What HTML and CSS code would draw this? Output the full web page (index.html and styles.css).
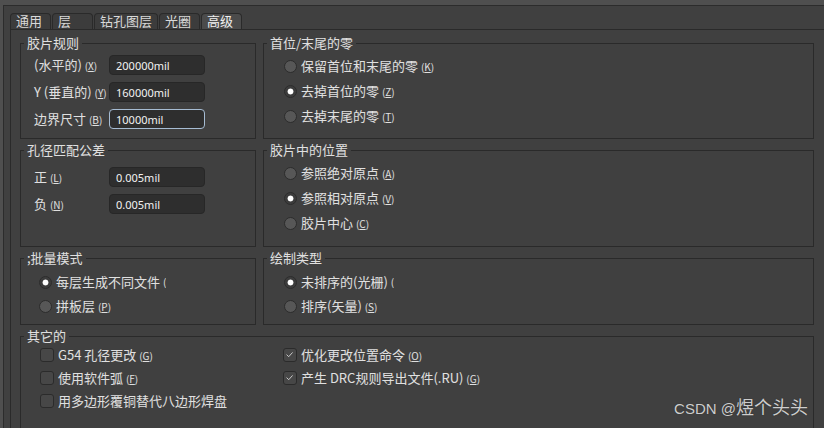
FILE: index.html
```html
<!DOCTYPE html>
<html lang="zh-CN">
<head>
    <meta charset="UTF-8">
    <meta name="viewport" content="width=device-width, initial-scale=1.0">
    <title>Gerber 设置 - 高级</title>
    <link rel="stylesheet" href="styles.css">
</head>
<body>
    <section class="dialog">
      <div class="tabs">
        <span class="tab">通用</span>
        <span class="tab">层</span>
        <span class="tab">钻孔图层</span>
        <span class="tab">光圈</span>
        <span class="tab is-active">高级</span>
      </div>

      <div class="panel">
        <fieldset class="group">
          <legend class="group-title">胶片规则</legend>
          <div class="fields">
            <label class="field-label">(水平的) <span class="key">(<u>X</u>)</span></label>
            <input class="field-input" type="text" value="200000mil" readonly>
            <label class="field-label">Y (垂直的) <span class="key">(<u>Y</u>)</span></label>
            <input class="field-input" type="text" value="160000mil" readonly>
            <label class="field-label">边界尺寸 <span class="key">(<u>B</u>)</span></label>
            <input class="field-input is-focused" type="text" value="10000mil" readonly>
          </div>
        </fieldset>

        <fieldset class="group">
          <legend class="group-title">首位/末尾的零</legend>
          <div class="options">
            <div class="option"><span class="radio"></span><span>保留首位和末尾的零 <span class="key">(<u>K</u>)</span></span></div>
            <div class="option"><span class="radio is-checked"></span><span>去掉首位的零 <span class="key">(<u>Z</u>)</span></span></div>
            <div class="option"><span class="radio"></span><span>去掉末尾的零 <span class="key">(<u>T</u>)</span></span></div>
          </div>
        </fieldset>

        <fieldset class="group">
          <legend class="group-title">孔径匹配公差</legend>
          <div class="fields fields-tolerance">
            <label class="field-label">正 <span class="key">(<u>L</u>)</span></label>
            <input class="field-input" type="text" value="0.005mil" readonly>
            <label class="field-label">负 <span class="key">(<u>N</u>)</span></label>
            <input class="field-input" type="text" value="0.005mil" readonly>
          </div>
        </fieldset>

        <fieldset class="group">
          <legend class="group-title">胶片中的位置</legend>
          <div class="options">
            <div class="option"><span class="radio"></span><span>参照绝对原点 <span class="key">(<u>A</u>)</span></span></div>
            <div class="option"><span class="radio is-checked"></span><span>参照相对原点 <span class="key">(<u>V</u>)</span></span></div>
            <div class="option"><span class="radio"></span><span>胶片中心 <span class="key">(<u>C</u>)</span></span></div>
          </div>
        </fieldset>

        <fieldset class="group">
          <legend class="group-title">;批量模式</legend>
          <div class="options options-short options-batch">
            <div class="option"><span class="radio is-checked"></span><span>每层生成不同文件 <span class="key key-cut">(</span></span></div>
            <div class="option"><span class="radio"></span><span>拼板层 <span class="key">(<u>P</u>)</span></span></div>
          </div>
        </fieldset>

        <fieldset class="group">
          <legend class="group-title">绘制类型</legend>
          <div class="options options-short">
            <div class="option"><span class="radio is-checked"></span><span>未排序的(光栅) <span class="key key-cut">(</span></span></div>
            <div class="option"><span class="radio"></span><span>排序(矢量) <span class="key">(<u>S</u>)</span></span></div>
          </div>
        </fieldset>

        <fieldset class="group group-wide">
          <legend class="group-title">其它的</legend>
          <div class="checks">
            <div class="check-col">
              <div class="option"><span class="check"></span><span>G54 孔径更改 <span class="key">(<u>G</u>)</span></span></div>
              <div class="option"><span class="check"></span><span>使用软件弧 <span class="key">(<u>F</u>)</span></span></div>
              <div class="option"><span class="check"></span><span>用多边形覆铜替代八边形焊盘</span></div>
            </div>
            <div class="check-col">
              <div class="option">
                <span class="check"><svg viewBox="0 0 14 14" width="12" height="12"><polyline points="3,6.5 5.5,9 10,4" fill="none" stroke="#cfcfcf" stroke-width="1.1"/></svg></span>
                <span>优化更改位置命令 <span class="key">(<u>O</u>)</span></span>
              </div>
              <div class="option">
                <span class="check"><svg viewBox="0 0 14 14" width="12" height="12"><polyline points="3,6.5 5.5,9 10,4" fill="none" stroke="#cfcfcf" stroke-width="1.1"/></svg></span>
                <span>产生 DRC规则导出文件(.RU) <span class="key">(<u>G</u>)</span></span>
              </div>
            </div>
          </div>
        </fieldset>
      </div>
    </section>

    <div class="watermark">CSDN @<span class="watermark-name">煜个头头</span></div>
</body>
</html>
```

FILE: styles.css
```css
html,
body {
  height: 100%;
}

body {
  position: relative;
  margin: 0;
  overflow: hidden;

  font-size: 13px;
  line-height: 16px;
  font-family: "Noto Sans CJK SC", "Noto Sans", sans-serif;
  color: #e0e0e0;

  background-color: #4f4f4f;
}

.dialog {
  display: flex;
  flex-direction: column;
  margin: 5px 0 0 3px;
  padding: 7px 0 0 6px;

  background-color: #404040;
  border-top: 1px solid #2c2c2c;
  border-left: 1px solid #2c2c2c;
}

.tabs {
  display: flex;
  gap: 1px;
  height: 16px;
}

.tab {
  box-sizing: border-box;
  min-width: 41px;
  height: 16px;
  padding: 0 5px;

  line-height: 14px;
  color: #d9d9d9;

  background-color: #3c3c3c;
  border: 1px solid #2a2a2a;
  border-bottom: none;
  border-radius: 4px 4px 0 0;
}

.tab.is-active {
  color: #f0f0f0;
  background-color: #4b4b4b;
}

.panel {
  display: grid;
  grid-template-columns: 236px 551px;
  grid-template-rows: 104px 105px 75px 120px;
  gap: 3px 7px;
  padding: 5px 10px 0 9px;

  border-top: 1px solid #2a2a2a;
  border-left: 1px solid #2a2a2a;
}

.group {
  min-width: 0;
  margin: 0;
  padding: 0;
  border: 1px solid #2a2a2a;
}

.group-wide {
  grid-column: 1 / -1;
}

.group-title {
  margin-left: 3px;
  padding: 0 3px;
  line-height: 16px;
}

.fields {
  display: grid;
  grid-template-columns: 75px 96px;
  align-items: center;
  row-gap: 7px;
  padding: 4px 0 0 13px;
}

.fields-tolerance {
  padding-top: 9px;
}

.field-input {
  box-sizing: border-box;
  width: 96px;
  height: 20px;
  padding: 0 6px;

  font: 11px "Noto Sans", sans-serif;
  color: #f2f2f2;

  background-color: #2e2e2e;
  border: 1px solid #272727;
  border-radius: 4px;
  outline: none;
}

.field-input.is-focused {
  border-color: #a6bcd3;
}

.key {
  font-size: 10px;
}

.key-cut {
  display: inline-block;
  width: 3px;
  overflow: hidden;
  vertical-align: top;
}

.options {
  display: flex;
  flex-direction: column;
  gap: 5px;
  padding: 5px 0 0 20px;
}

.options-short {
  gap: 4px;
  padding-top: 6px;
}

.options-batch {
  padding-left: 18px;
}

.option {
  display: flex;
  align-items: center;
  gap: 4px;
  height: 20px;
  white-space: nowrap;
}

.radio {
  flex-shrink: 0;
  box-sizing: border-box;
  width: 13px;
  height: 13px;

  background-color: #575757;
  border: 1px solid #2c2c2c;
  border-radius: 50%;
}

.radio.is-checked {
  background: radial-gradient(circle, #ffffff 0 2.6px, #3c3c3c 3.3px);
}

.checks {
  display: grid;
  grid-template-columns: 243px 1fr;
  padding: 1px 0 0 19px;
}

.check-col {
  display: flex;
  flex-direction: column;
  gap: 3px;
}

.check {
  display: flex;
  align-items: center;
  justify-content: center;
  flex-shrink: 0;
  box-sizing: border-box;
  width: 14px;
  height: 14px;

  background-color: #474747;
  border: 1px solid #2b2b2b;
  border-radius: 3px;
}

.watermark {
  position: absolute;
  right: 16px;
  bottom: 8px;

  font-size: 15px;
  line-height: 22px;
  font-family: "Liberation Sans", "Noto Sans CJK SC", sans-serif;
  color: #cdcdcd;
  text-shadow: 0 0 1px #2a2a2a;
}

.watermark-name {
  font-size: 18px;
  font-family: "Noto Sans CJK SC", sans-serif;
}
```
